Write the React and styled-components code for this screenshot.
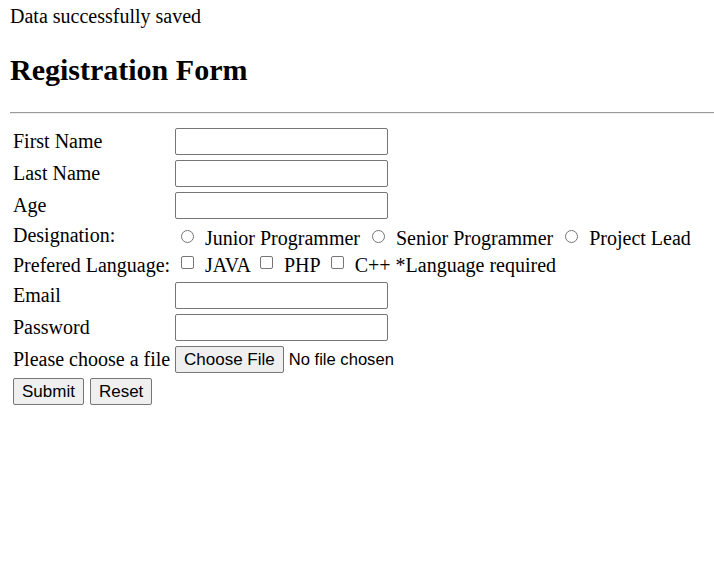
import React from "react";
import styled, { createGlobalStyle } from "styled-components";

const GlobalStyle = createGlobalStyle`
  body {
    margin: 0;
    background: #ffffff;
    color: #000000;
    font-family: "Liberation Serif", "Times New Roman", serif;
  }
`;

const Page = styled.div`
  padding: 5px 0 0 10px;
`;

const Notice = styled.p`
  margin: 0;
  font-size: 20px;
  line-height: 23px;
`;

const Title = styled.h2`
  margin: 24px 0 25px;
  font-size: 30px;
  line-height: 35px;
  font-weight: 700;
`;

const Divider = styled.hr`
  margin: 0 0 13px;
  height: 0;
  border: 0;
  border-top: 1px solid #9a9a9a;
  border-bottom: 1px solid #eeeeee;
`;

const Form = styled.form`
  display: flex;
  flex-direction: column;
  gap: 2px;
  padding-left: 3px;
`;

const Row = styled.div`
  display: flex;
  align-items: flex-start;
  height: ${(p) => p.$h || 30}px;
`;

const Label = styled.div`
  width: 162px;
  flex-shrink: 0;
  font-size: 20px;
  line-height: 23px;
  margin-top: ${(p) => p.$top ?? 3}px;
  white-space: nowrap;
`;

const TextField = styled.input`
  box-sizing: border-box;
  width: 213px;
  height: 27px;
  margin: 1px 0 0;
  padding: 1px 2px;
  border: 1px solid #767676;
  border-radius: 2px;
  font-family: "Liberation Sans", Arial, sans-serif;
  font-size: 17px;
  background: #ffffff;
`;

const Choices = styled.div`
  display: flex;
  align-items: flex-start;
  white-space: nowrap;
`;

const Choice = styled.label`
  display: flex;
  align-items: flex-start;
  margin-left: ${(p) => p.$lead ?? 6}px;
  font-size: 20px;
  line-height: 23px;
`;

const Mark = styled.input`
  appearance: none;
  box-sizing: border-box;
  width: 13px;
  height: 13px;
  margin: ${(p) => p.$top}px 11px 0 0;
  flex-shrink: 0;
  border: 1px solid #767676;
  border-radius: ${(p) => (p.type === "radio" ? "50%" : "2px")};
  background: #ffffff;
`;

const ChoiceText = styled.span`
  margin-top: ${(p) => p.$top}px;
`;

const Hint = styled.span`
  margin: ${(p) => p.$top}px 0 0 5px;
  font-size: 20px;
  line-height: 23px;
  white-space: nowrap;
`;

const Button = styled.button`
  box-sizing: border-box;
  height: 27px;
  margin: 1px 0 0;
  padding: 0 8px;
  border: 1px solid #767676;
  border-radius: 2px;
  background: #efefef;
  color: #000000;
  font-family: "Liberation Sans", Arial, sans-serif;
  font-size: 17px;
  line-height: 19px;
`;

const FileStatus = styled.span`
  margin: 1px 0 0 5px;
  font-family: "Liberation Sans", Arial, sans-serif;
  font-size: 16.6px;
  line-height: 27px;
  white-space: nowrap;
`;

const Actions = styled.div`
  display: flex;
  gap: 6px;
`;

const designations = [
  { text: "Junior Programmer", lead: 6 },
  { text: "Senior Programmer", lead: 12 },
  { text: "Project Lead", lead: 12 },
];

const languages = [
  { text: "JAVA", lead: 6 },
  { text: "PHP", lead: 9 },
  { text: "C++", lead: 10 },
];

function App() {
  return (
    <Page>
      <GlobalStyle />
      <Notice>Data successfully saved</Notice>
      <Title>Registration Form</Title>
      <Divider />
      <Form onSubmit={(e) => e.preventDefault()}>
        <Row>
          <Label>First Name</Label>
          <TextField type="text" />
        </Row>
        <Row>
          <Label>Last Name</Label>
          <TextField type="text" />
        </Row>
        <Row>
          <Label>Age</Label>
          <TextField type="text" />
        </Row>
        <Row $h={28}>
          <Label $top={1}>Designation:</Label>
          <Choices>
            {designations.map((d) => (
              <Choice key={d.text} $lead={d.lead}>
                <Mark type="radio" name="designation" $top={7} />
                <ChoiceText $top={4}>{d.text}</ChoiceText>
              </Choice>
            ))}
          </Choices>
        </Row>
        <Row $h={26}>
          <Label $top={1}>Prefered Language:</Label>
          <Choices>
            {languages.map((l) => (
              <Choice key={l.text} $lead={l.lead}>
                <Mark type="checkbox" $top={3} />
                <ChoiceText $top={1}>{l.text}</ChoiceText>
              </Choice>
            ))}
            <Hint $top={1}>*Language required</Hint>
          </Choices>
        </Row>
        <Row>
          <Label>Email</Label>
          <TextField type="email" />
        </Row>
        <Row>
          <Label>Password</Label>
          <TextField type="password" />
        </Row>
        <Row>
          <Label>Please choose a file</Label>
          <Button type="button">Choose File</Button>
          <FileStatus>No file chosen</FileStatus>
        </Row>
        <Row>
          <Actions>
            <Button type="submit">Submit</Button>
            <Button type="reset">Reset</Button>
          </Actions>
        </Row>
      </Form>
    </Page>
  );
}

export default App;
